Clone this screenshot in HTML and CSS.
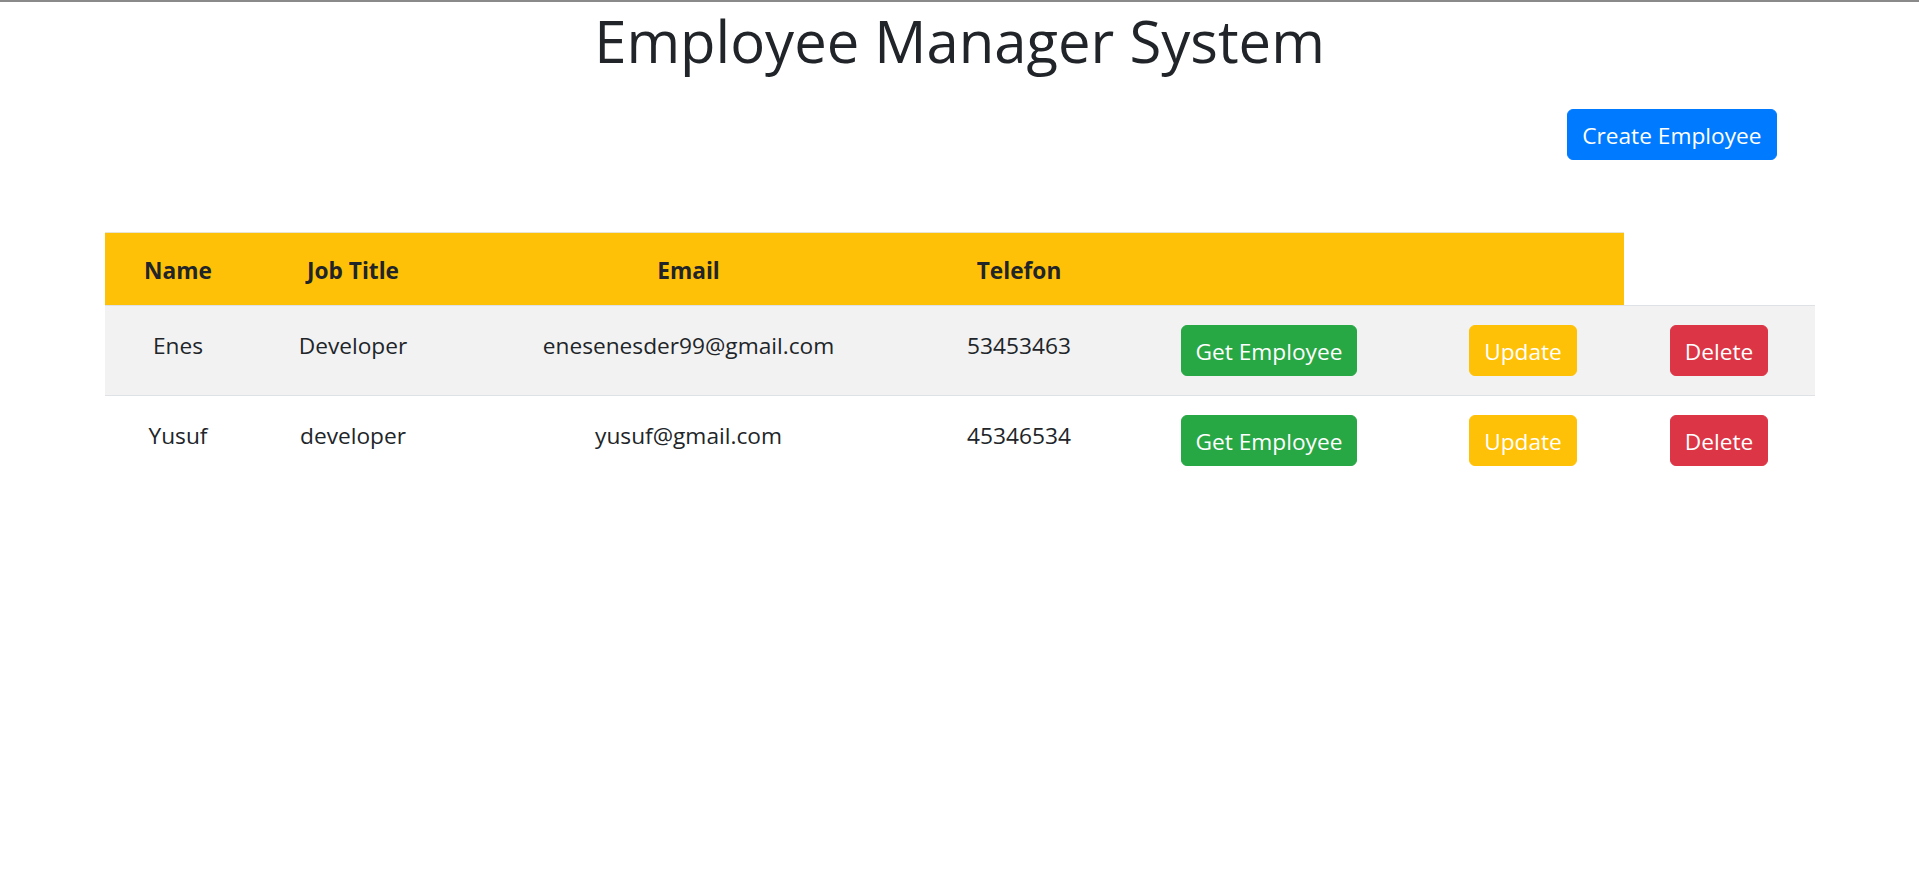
FILE: index.html
```html
<!DOCTYPE html>
<html lang="en">
<head>
<meta charset="utf-8">
<title>Employee Manager System</title>
<link rel="stylesheet" href="styles.css">
</head>
<body>
<div class="container">
  <h1 class="title">Employee Manager System</h1>
  <div class="toolbar">
    <button class="btn btn-primary">Create Employee</button>
  </div>
  <table class="emp-table">
    <colgroup>
      <col class="c-name">
      <col class="c-job">
      <col class="c-email">
      <col class="c-tel">
      <col class="c-get">
      <col class="c-upd">
      <col class="c-del">
    </colgroup>
    <thead>
      <tr>
        <th>Name</th>
        <th>Job Title</th>
        <th>Email</th>
        <th>Telefon</th>
        <th></th>
        <th></th>
      </tr>
    </thead>
    <tbody>
      <tr class="striped">
        <td>Enes</td>
        <td>Developer</td>
        <td>enesenesder99@gmail.com</td>
        <td>53453463</td>
        <td><button class="btn btn-success">Get Employee</button></td>
        <td><button class="btn btn-warning">Update</button></td>
        <td><button class="btn btn-danger">Delete</button></td>
      </tr>
      <tr>
        <td>Yusuf</td>
        <td>developer</td>
        <td>yusuf@gmail.com</td>
        <td>45346534</td>
        <td><button class="btn btn-success">Get Employee</button></td>
        <td><button class="btn btn-warning">Update</button></td>
        <td><button class="btn btn-danger">Delete</button></td>
      </tr>
    </tbody>
  </table>
</div>
</body>
</html>
```
FILE: styles.css
```css
html, body {
  margin: 0;
  padding: 0;
  background: #ffffff;
}

body {
  border-top: 2px solid #8a8a8a;
  font-family: "Open Sans", "Noto Sans", "DejaVu Sans", sans-serif;
  color: #212529;
  font-size: 22.7px;
}

.container {
  width: 1710px;
  margin: 0 auto;
}

.title {
  margin: 4px 0 0;
  font-size: 58px;
  font-weight: 500;
  line-height: 70px;
  text-align: center;
  color: #212529;
}

.toolbar {
  display: flex;
  justify-content: flex-end;
  margin-top: 33px;
  padding-right: 38px;
}

.btn {
  font-family: inherit;
  font-size: 22.7px;
  line-height: 35px;
  padding: 8px 14px 6px;
  border: 1px solid transparent;
  border-radius: 6px;
  color: #ffffff;
  cursor: pointer;
  display: inline-block;
  vertical-align: top;
  margin: 0;
}

.btn-primary { background: #007bff; border-color: #007bff; }
.btn-success { background: #28a745; border-color: #28a745; }
.btn-warning { background: #ffc107; border-color: #ffc107; color: #ffffff; }
.btn-danger  { background: #dc3545; border-color: #dc3545; }

.emp-table {
  margin-top: 72px;
  width: 1710px;
  table-layout: fixed;
  border-collapse: collapse;
}

.c-name  { width: 147px; }
.c-job   { width: 203px; }
.c-email { width: 468px; }
.c-tel   { width: 193px; }
.c-get   { width: 307px; }
.c-upd   { width: 201px; }
.c-del   { width: 191px; }

.emp-table th {
  background: #ffc107;
  font-weight: 700;
  line-height: 36px;
  padding: 20px 0 16px;
  border-top: 1px solid #e9e4d2;
  text-align: center;
  vertical-align: top;
}

.emp-table td {
  text-align: center;
  vertical-align: top;
  padding: 19px 0;
  line-height: 42px;
  border-top: 1px solid #dee2e6;
}

.emp-table tr.striped td {
  background: #f2f2f2;
}
```
